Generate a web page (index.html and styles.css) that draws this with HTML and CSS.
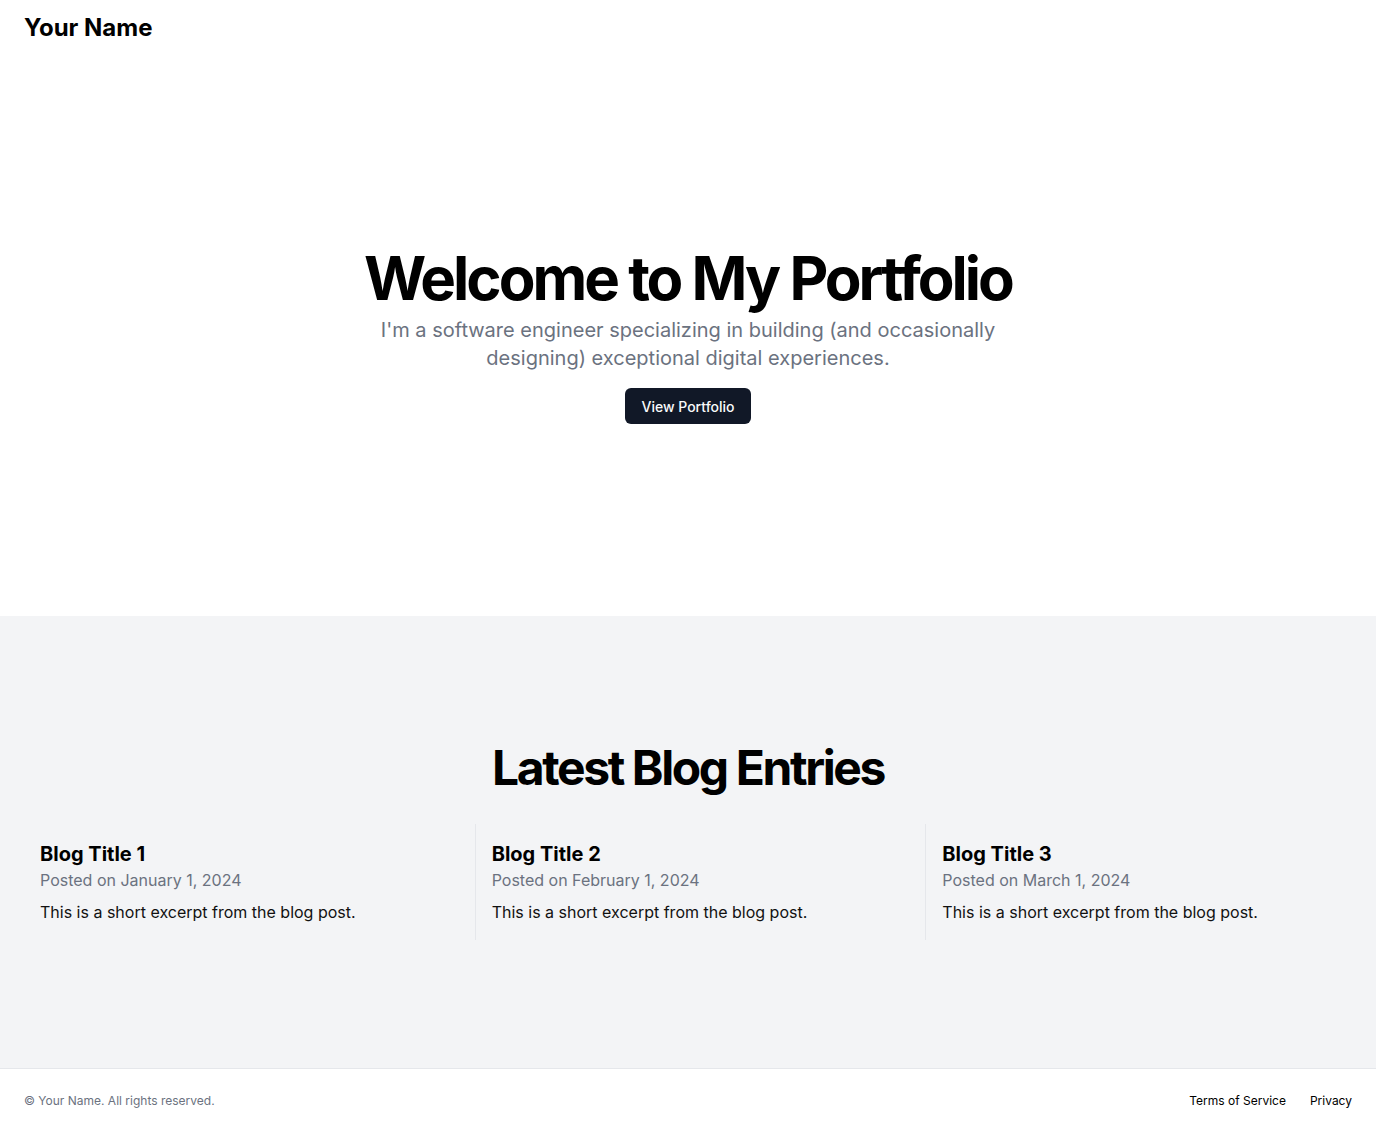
FILE: index.html
```html
<!DOCTYPE html>
<html lang="en">
<head>
<meta charset="utf-8">
<title>Your Name</title>
<link rel="stylesheet" href="styles.css">
</head>
<body>
<div class="page">
  <header class="site-header">
    <a class="brand" href="#">Your Name</a>
  </header>
  <main class="main">
    <section class="hero">
      <div class="hero-inner">
        <div class="hero-text">
          <h1 class="hero-title">Welcome to My Portfolio</h1>
          <p class="hero-sub">I'm a software engineer specializing in building (and occasionally designing) exceptional digital experiences.</p>
        </div>
        <a class="btn" href="#">View Portfolio</a>
      </div>
    </section>
    <section class="blog">
      <div class="container">
        <h2 class="blog-title">Latest Blog Entries</h2>
        <div class="blog-grid">
          <article class="post">
            <h3 class="post-title">Blog Title 1</h3>
            <p class="post-date">Posted on January 1, 2024</p>
            <p class="post-excerpt">This is a short excerpt from the blog post.</p>
          </article>
          <article class="post">
            <h3 class="post-title">Blog Title 2</h3>
            <p class="post-date">Posted on February 1, 2024</p>
            <p class="post-excerpt">This is a short excerpt from the blog post.</p>
          </article>
          <article class="post">
            <h3 class="post-title">Blog Title 3</h3>
            <p class="post-date">Posted on March 1, 2024</p>
            <p class="post-excerpt">This is a short excerpt from the blog post.</p>
          </article>
        </div>
      </div>
    </section>
  </main>
  <footer class="site-footer">
    <p class="copy">© Your Name. All rights reserved.</p>
    <nav class="footer-nav">
      <a href="#">Terms of Service</a>
      <a href="#">Privacy</a>
    </nav>
  </footer>
</div>
</body>
</html>
```
FILE: styles.css
```css
* { box-sizing: border-box; margin: 0; padding: 0; }
html, body { background: #fff; }
body {
  font-family: Inter, "Noto Sans", "Liberation Sans", sans-serif;
  color: #000;
  line-height: 1.5;
}
a { color: inherit; text-decoration: none; }
.page { display: flex; flex-direction: column; min-height: 100vh; }
.site-header {
  height: 56px;
  display: flex;
  align-items: center;
  padding: 0 24px;
}
.brand { font-size: 24px; font-weight: 700; line-height: 32px; }
.main { flex: 1; }
.hero { padding: 192px 24px; }
.hero-inner {
  display: flex;
  flex-direction: column;
  align-items: center;
  gap: 16px;
  text-align: center;
}
.hero-text { display: flex; flex-direction: column; gap: 8px; align-items: center; }
.hero-title {
  font-size: 60px;
  line-height: 1;
  font-weight: 700;
  letter-spacing: -0.05em;
}
.hero-sub {
  max-width: 700px;
  font-size: 20px;
  line-height: 28px;
  color: #6b7280;
}
.btn {
  display: inline-flex;
  align-items: center;
  height: 36px;
  padding: 0 16px;
  border-radius: 6px;
  background: #111827;
  color: #f9fafb;
  font-size: 14px;
  font-weight: 500;
}
.blog { background: #f3f4f6; padding: 128px 0; }
.container { padding: 0 24px; }
.blog-title {
  text-align: center;
  font-size: 48px;
  line-height: 1;
  font-weight: 700;
  letter-spacing: -0.05em;
}
.blog-grid {
  margin-top: 32px;
  display: grid;
  grid-template-columns: repeat(3, 1fr);
  gap: 24px;
}
.post { padding: 16px; }
.post + .post { border-left: 1px solid #e5e7eb; }
.post-title { font-size: 20px; line-height: 28px; font-weight: 700; }
.post-date { color: #6b7280; font-size: 16px; line-height: 24px; }
.post-excerpt { margin-top: 8px; font-size: 16px; line-height: 24px; color: #111; }
.site-footer {
  border-top: 1px solid #e5e7eb;
  padding: 24px;
  display: flex;
  align-items: center;
  justify-content: space-between;
}
.copy { font-size: 12px; line-height: 16px; color: #6b7280; }
.footer-nav { display: flex; gap: 24px; font-size: 12px; line-height: 16px; }
```
